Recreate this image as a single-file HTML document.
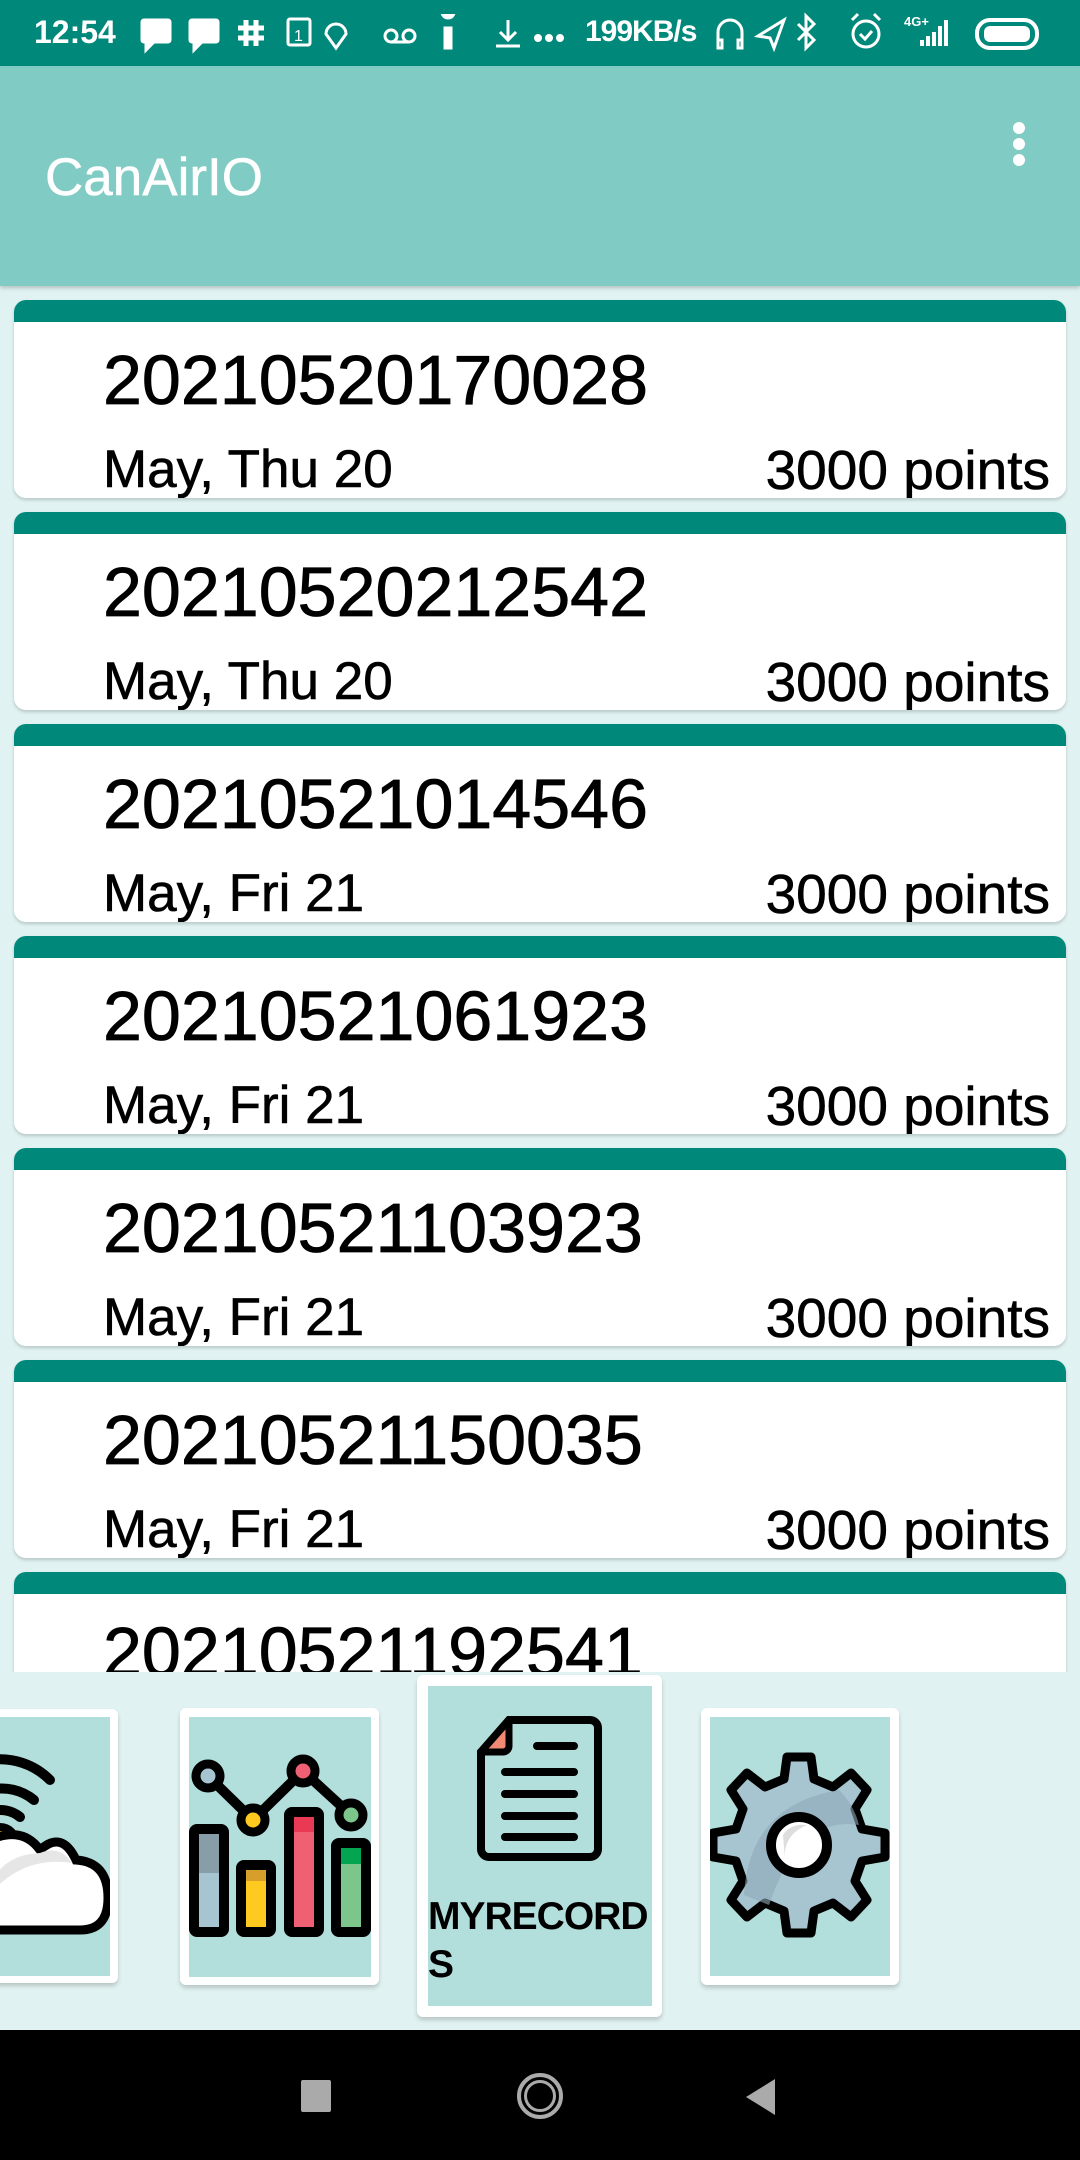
<!DOCTYPE html>
<html><head><meta charset="utf-8"><style>
*{margin:0;padding:0;box-sizing:border-box}
body{width:1080px;height:2160px;position:relative;overflow:hidden;background:#e0f2f1;font-family:"Liberation Sans",sans-serif}
.abs{position:absolute}
#status{left:0;top:0;width:1080px;height:66px;background:#00897b;color:#fff}
#appbar{left:0;top:66px;width:1080px;height:220px;background:#80cbc4;box-shadow:0 2px 4px rgba(0,0,0,.2)}
.card{position:absolute;left:14px;width:1052px;height:198px;background:#fff;border-radius:12px;overflow:hidden;box-shadow:0 2px 3px rgba(0,0,0,.18)}
.card .hd{height:22px;background:#00897b}
.card .t{position:absolute;left:89px;top:40px;font-size:70px;color:#000;line-height:80px;-webkit-text-stroke:0.8px #000}
.card .d{position:absolute;left:89px;top:140px;font-size:53px;line-height:60px;-webkit-text-stroke:0.6px #000}
.card .p{position:absolute;right:16px;top:140px;font-size:55px;line-height:60px;-webkit-text-stroke:0.6px #000}
#bottom{left:0;top:1672px;width:1080px;height:358px;background:#e0f2f1}
.it{position:absolute;background:#fff;border-radius:6px;box-shadow:0 3px 4px rgba(0,0,0,.18)}
.in{position:absolute;background:#b2dfdb;overflow:hidden}
#nav{left:0;top:2030px;width:1080px;height:130px;background:#000}
</style></head><body>
<div id="status" class="abs">
<div class="abs" style="left:34px;top:12px;font-size:32px;font-weight:bold;line-height:40px">12:54</div>
<svg class="abs" style="left:138px;top:14px" width="430" height="40" viewBox="0 0 430 40" fill="none" stroke="#fff" stroke-width="3">
<rect x="4" y="6" width="28" height="22" rx="2" fill="#fff"/><path d="M8 28 L8 36 L16 28" fill="#fff"/>
<rect x="52" y="6" width="28" height="22" rx="2" fill="#fff"/><path d="M56 28 L56 36 L64 28" fill="#fff"/>
<path d="M108 6v26M118 6v26M100 14h26M100 24h26" stroke-width="5"/>
<rect x="150" y="5" width="22" height="26" rx="2"/><text x="156" y="27" fill="#fff" stroke="none" font-size="16" font-family="Liberation Sans">1</text>
<path d="M198 34 L188 20 A10 10 0 1 1 208 20 Z"/>
<circle cx="253" cy="22" r="6"/><circle cx="271" cy="22" r="6"/><path d="M253 28h18"/>
<path d="M310 4 a6 6 0 1 1 0.1 0 M307 14 h6 v20 h-6z" fill="#fff"/>
<path d="M370 6v18M362 18l8 8 8-8M358 32h24"/>
<circle cx="400" cy="24" r="2.5" fill="#fff"/><circle cx="411" cy="24" r="2.5" fill="#fff"/><circle cx="422" cy="24" r="2.5" fill="#fff"/>
</svg>
<div class="abs" style="left:585px;top:12px;font-size:30px;font-weight:bold;line-height:40px;letter-spacing:-1px">199KB/s</div>
<svg class="abs" style="left:712px;top:10px" width="340" height="46" viewBox="0 0 340 46" fill="none" stroke="#fff" stroke-width="3">
<path d="M6 36 V22 A12 12 0 0 1 30 22 V36 M6 30h4v8h-4zM26 30h4v8h-4z"/>
<path d="M46 26 L72 10 L62 38 L58 28 Z"/>
<path d="M86 14 L102 30 L94 38 V6 L102 14 L86 30"/>
<circle cx="154" cy="24" r="13"/><path d="M148 24l5 5 7-8M140 10l6-6M168 10l-6-6"/>
<text x="192" y="16" fill="#fff" stroke="none" font-size="13" font-weight="bold" font-family="Liberation Sans">4G+</text>
<path d="M210 36v-6M216 36v-10M222 36v-14M228 36v-20M234 36v-26" stroke-width="4"/>
<rect x="265" y="10" width="60" height="28" rx="13" stroke-width="4"/><rect x="272" y="16" width="46" height="16" rx="6" fill="#fff" stroke="none"/>
</svg>
</div>
<div id="appbar" class="abs">
<div class="abs" style="left:45px;top:82px;font-size:53px;color:#fff;line-height:60px;-webkit-text-stroke:0.5px #fff">CanAirIO</div>
<div class="abs" style="left:1013px;top:56px;width:12px;height:12px;border-radius:6px;background:#fff"></div>
<div class="abs" style="left:1013px;top:72px;width:12px;height:12px;border-radius:6px;background:#fff"></div>
<div class="abs" style="left:1013px;top:88px;width:12px;height:12px;border-radius:6px;background:#fff"></div>
</div>

<div class="card" style="top:300px"><div class="hd"></div><div class="t">20210520170028</div><div class="d">May, Thu 20</div><div class="p">3000 points</div></div>
<div class="card" style="top:512px"><div class="hd"></div><div class="t">20210520212542</div><div class="d">May, Thu 20</div><div class="p">3000 points</div></div>
<div class="card" style="top:724px"><div class="hd"></div><div class="t">20210521014546</div><div class="d">May, Fri 21</div><div class="p">3000 points</div></div>
<div class="card" style="top:936px"><div class="hd"></div><div class="t">20210521061923</div><div class="d">May, Fri 21</div><div class="p">3000 points</div></div>
<div class="card" style="top:1148px"><div class="hd"></div><div class="t">20210521103923</div><div class="d">May, Fri 21</div><div class="p">3000 points</div></div>
<div class="card" style="top:1360px"><div class="hd"></div><div class="t">20210521150035</div><div class="d">May, Fri 21</div><div class="p">3000 points</div></div>
<div class="card" style="top:1572px"><div class="hd"></div><div class="t">20210521192541</div><div class="d">May, Fri 21</div><div class="p">3000 points</div></div>

<div id="bottom" class="abs"></div>
<div class="it" style="left:-10px;top:1709px;width:128px;height:274px"></div>
<div class="in" style="left:0;top:1717px;width:110px;height:259px">
<svg width="110" height="259" viewBox="0 1717 110 259">
<g fill="none" stroke="#000" stroke-width="10" stroke-linecap="round">
<path d="M-10 1760 A70 70 0 0 1 50 1780"/><path d="M-10 1790 A50 50 0 0 1 34 1800"/><path d="M-10 1812 A30 30 0 0 1 20 1817"/>
</g>
<circle cx="0" cy="1843" r="16" fill="#ffca28" stroke="#000" stroke-width="8"/>
<path d="M-20 1930 L-20 1845 Q20 1822 40 1850 Q62 1830 76 1860 Q108 1862 108 1898 Q108 1930 80 1930 Z" fill="#fff" stroke="#000" stroke-width="9"/>
<path d="M-15 1900 Q-5 1855 40 1853 Q60 1845 72 1863 Q20 1855 -15 1900Z" fill="#e6e6e6"/>
</svg></div>

<div class="it" style="left:180px;top:1708px;width:199px;height:277px"></div>
<div class="in" style="left:189px;top:1717px;width:182px;height:260px">
<svg width="182" height="260" viewBox="189 1717 182 260">
<path d="M208 1776 L253 1820 L303 1771 L351 1815" fill="none" stroke="#000" stroke-width="10"/>
<rect x="194" y="1829" width="30" height="103" fill="#a7c4d1" stroke="#000" stroke-width="10" rx="3"/><rect x="199" y="1834" width="20" height="39" fill="#879ea8"/>
<rect x="241" y="1865" width="30" height="67" fill="#ffca1f" stroke="#000" stroke-width="10" rx="3"/><rect x="246" y="1870" width="20" height="11" fill="#d69e2b"/>
<rect x="289" y="1812" width="30" height="120" fill="#f06074" stroke="#000" stroke-width="10" rx="3"/><rect x="294" y="1817" width="20" height="15" fill="#e83a55"/>
<rect x="336" y="1843" width="30" height="89" fill="#7cc68b" stroke="#000" stroke-width="10" rx="3"/><rect x="341" y="1848" width="20" height="16" fill="#04a552"/>
<circle cx="208" cy="1776" r="12" fill="#a7c4d1" stroke="#000" stroke-width="9"/>
<circle cx="253" cy="1820" r="12" fill="#ffca1f" stroke="#000" stroke-width="9"/>
<circle cx="303" cy="1771" r="12" fill="#f06074" stroke="#000" stroke-width="9"/>
<circle cx="351" cy="1815" r="12" fill="#7cc68b" stroke="#000" stroke-width="9"/>
</svg></div>

<div class="it" style="left:417px;top:1675px;width:245px;height:342px"></div>
<div class="in" style="left:428px;top:1686px;width:224px;height:320px">
<svg class="abs" style="left:0;top:0" width="224" height="320" viewBox="428 1686 224 320">
<path d="M509 1720 H590 A8 8 0 0 1 598 1728 V1849 A8 8 0 0 1 590 1857 H489 A8 8 0 0 1 481 1849 V1752 Z" fill="none" stroke="#000" stroke-width="8"/>
<path d="M509 1720 L481 1752 H503 A6 6 0 0 0 509 1746 Z" fill="#f08a74" stroke="#000" stroke-width="7" stroke-linejoin="round"/>
<g stroke="#000" stroke-width="8" stroke-linecap="round"><path d="M537 1746H574M505 1772H574M505 1794H574M505 1816H574M505 1837H574"/></g>
</svg>
<div class="abs" style="left:0;top:1893px;margin-top:-1686px;font-size:39px;font-weight:bold;line-height:48px;letter-spacing:-1px">MYRECORD<br>S</div>
</div>

<div class="it" style="left:701px;top:1708px;width:198px;height:277px"></div>
<div class="in" style="left:710px;top:1717px;width:180px;height:259px">
<svg width="180" height="259" viewBox="710 1717 180 259">
<g transform="translate(799 1845)">
<path d="M-12 -88 H12 L15 -66 L34 -58 L52 -72 L68 -55 L56 -36 L63 -16 L86 -12 V12 L63 16 L56 36 L68 55 L52 72 L34 58 L15 66 L12 88 H-12 L-15 66 L-34 58 L-52 72 L-68 55 L-56 36 L-63 16 L-86 12 V-12 L-63 -16 L-56 -36 L-68 -55 L-52 -72 L-34 -58 L-15 -66 Z" fill="#a7c4d1" stroke="#000" stroke-width="9" stroke-linejoin="round"/>
<path d="M-55 50 Q-50 -40 40 -55 Q55 -40 60 -20 Q0 -30 -30 60Z" fill="#8eaab8" opacity=".6"/>
<circle r="28" fill="#fff" stroke="#000" stroke-width="10"/>
<path d="M-14 14 Q-16 -10 8 -20 Q-8 -22 -16 -10 Z" fill="#ddd"/>
</g>
</svg></div>

<div id="nav" class="abs">
<div class="abs" style="left:301px;top:50px;width:30px;height:32px;background:#aaa;border-radius:2px"></div>
<div class="abs" style="left:517px;top:43px;width:46px;height:46px;border-radius:50%;border:4px solid #aaa"></div>
<div class="abs" style="left:524px;top:50px;width:32px;height:32px;border-radius:50%;border:3px solid #aaa"></div>
<svg class="abs" style="left:744px;top:48px" width="32" height="38"><path d="M31 1 V37 L2 19 Z" fill="#aaa"/></svg>
</div>
</body></html>
